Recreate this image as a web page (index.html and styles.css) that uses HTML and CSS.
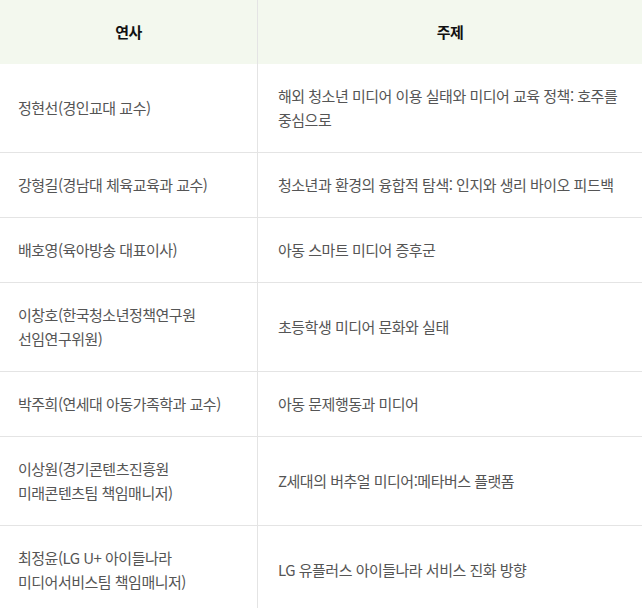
FILE: index.html
```html
<!DOCTYPE html>
<html lang="ko">
<head>
<meta charset="utf-8">
<title>연사 및 주제</title>
<link rel="stylesheet" href="styles.css">
</head>
<body>
<div class="table">
  <div class="row head">
    <div class="cell c1">연사</div>
    <div class="cell c2">주제</div>
  </div>
  <div class="row">
    <div class="cell c1">정현선(경인교대 교수)</div>
    <div class="cell c2">해외 청소년 미디어 이용 실태와 미디어 교육 정책: 호주를 중심으로</div>
  </div>
  <div class="row">
    <div class="cell c1">강형길(경남대 체육교육과 교수)</div>
    <div class="cell c2">청소년과 환경의 융합적 탐색: 인지와 생리 바이오 피드백</div>
  </div>
  <div class="row">
    <div class="cell c1">배호영(육아방송 대표이사)</div>
    <div class="cell c2">아동 스마트 미디어 증후군</div>
  </div>
  <div class="row">
    <div class="cell c1">이창호(한국청소년정책연구원<br>선임연구위원)</div>
    <div class="cell c2">초등학생 미디어 문화와 실태</div>
  </div>
  <div class="row">
    <div class="cell c1">박주희(연세대 아동가족학과 교수)</div>
    <div class="cell c2">아동 문제행동과 미디어</div>
  </div>
  <div class="row">
    <div class="cell c1">이상원(경기콘텐츠진흥원<br>미래콘텐츠팀 책임매니저)</div>
    <div class="cell c2">Z세대의 버추얼 미디어:메타버스 플랫폼</div>
  </div>
  <div class="row">
    <div class="cell c1">최정윤(LG U+ 아이들나라<br>미디어서비스팀 책임매니저)</div>
    <div class="cell c2">LG 유플러스 아이들나라 서비스 진화 방향</div>
  </div>
</div>
</body>
</html>
```
FILE: styles.css
```css
html, body {
  margin: 0;
  padding: 0;
  background: #ffffff;
}

body {
  font-family: "Noto Sans CJK KR", "Noto Sans", sans-serif;
  font-size: 15px;
  letter-spacing: -0.5px;
  color: #555555;
}

.table {
  width: 642px;
}

.row {
  display: grid;
  grid-template-columns: 258px 1fr;
  border-bottom: 1px solid #e4e4e4;
}

.cell {
  display: flex;
  align-items: center;
  padding: 20px 12px 20px 20px;
  line-height: 24px;
  min-width: 0;
  word-break: keep-all;
}

.cell.c1 {
  border-right: 1px solid #e4e4e4;
  padding-left: 18px;
}

.head {
  background: #f3f8ee;
  border-bottom: none;
}

.head .cell {
  justify-content: center;
  color: #111111;
  font-weight: 700;
  padding-left: 12px;
  padding-right: 12px;
}
```
